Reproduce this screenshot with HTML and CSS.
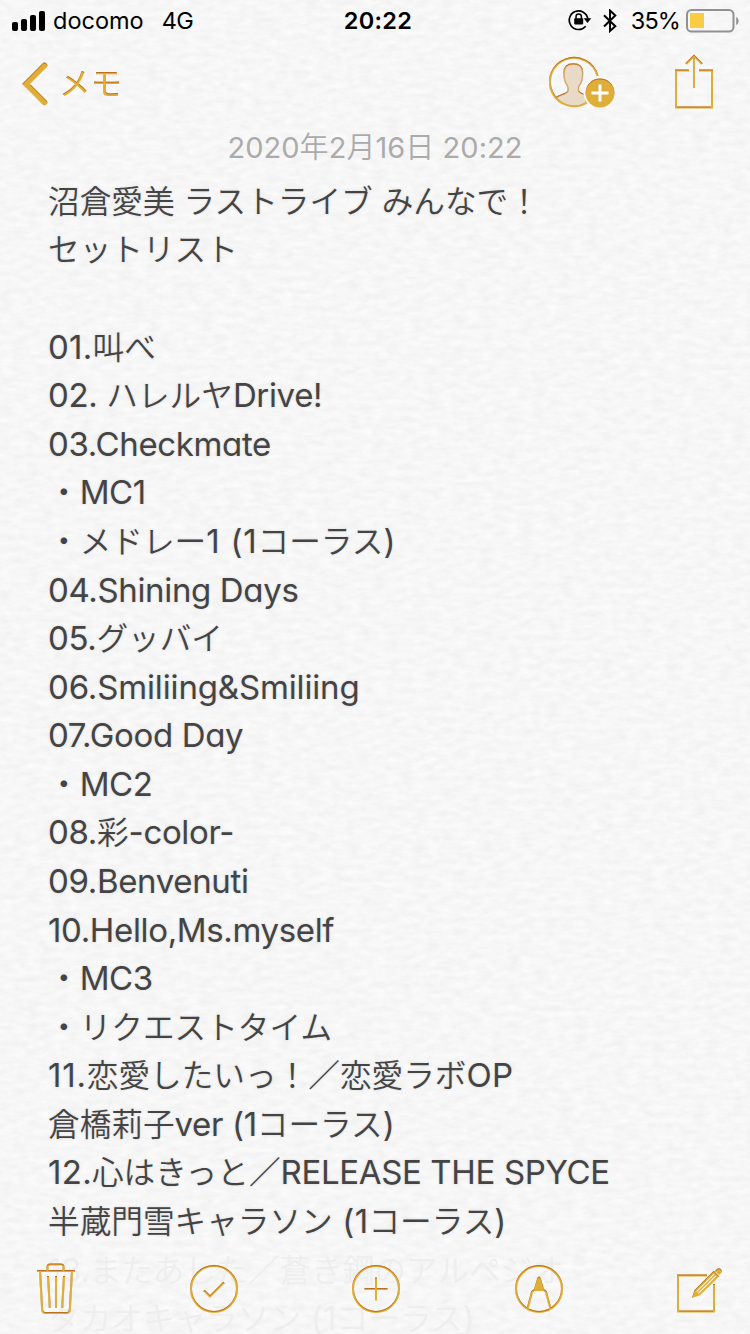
FILE: index.html
```html
<!DOCTYPE html>
<html lang="ja">
<head>
<meta charset="utf-8">
<title>メモ</title>
<link rel="stylesheet" href="styles.css">
</head>
<body>
<div class="screen">
  <svg class="paper" width="750" height="1334" aria-hidden="true">
    <defs>
      <filter id="grain" x="0" y="0" width="100%" height="100%" color-interpolation-filters="sRGB">
        <feTurbulence type="fractalNoise" baseFrequency="0.075 0.17" numOctaves="3" seed="7"/>
        <feColorMatrix values="0 0 0 0.055 0.938  0 0 0 0.055 0.938  0 0 0 0.055 0.938  0 0 0 0 1"/>
      </filter>
      <filter id="press" x="-10%" y="-10%" width="120%" height="120%" color-interpolation-filters="sRGB">
        <feOffset in="SourceAlpha" dy="1" result="down"/>
        <feFlood flood-color="#b9691a" flood-opacity="0.9"/>
        <feComposite in2="SourceAlpha" operator="in"/>
        <feComposite in2="down" operator="out" result="edge"/>
        <feMerge><feMergeNode in="SourceGraphic"/><feMergeNode in="edge"/></feMerge>
      </filter>
    </defs>
    <rect class="grain" width="750" height="1334"/>
  </svg>

  <header class="status">
    <div class="status-left">
      <svg width="34" height="20" viewBox="0 0 34 20"><rect x="0" y="11" width="6" height="9" rx="2"/><rect x="9" y="8" width="6" height="12" rx="2"/><rect x="18" y="4" width="6" height="16" rx="2"/><rect x="27" y="0" width="6" height="20" rx="2"/></svg>
      <span class="carrier">docomo</span><span class="network">4G</span>
    </div>
    <div class="clock">20:22</div>
    <div class="status-right">
      <svg class="lock" width="24" height="22" viewBox="0 0 24 22"><path d="M17.7 17.2A9.3 9.3 0 1 1 19.8 10" fill="none" stroke="#000" stroke-width="1.7"/><path d="M15.7 9.2h7.6L19.5 14z"/><rect x="6.2" y="9.2" width="9" height="6.2" rx=".8"/><path d="M8 10V7.7a2.7 2.7 0 0 1 5.4 0V10" fill="none" stroke="#000" stroke-width="1.5"/></svg>
      <svg class="bluetooth" width="14" height="24" viewBox="0 0 14 24"><path d="M1 6.3l11.3 11L7 22V1.5l5.3 5L1 17.5" fill="none" stroke="#000" stroke-width="2"/></svg>
      <span class="percent">35%</span>
      <svg class="battery" width="54" height="24" viewBox="0 0 54 24"><rect x="1" y="1" width="46.500" height="21.500" rx="4.500" fill="none" stroke="#919191" stroke-width="2"/><rect x="4" y="4" width="14" height="15" fill="#f8cd42"/><path d="M50.200 8c3.200 1.500 3.200 6.700 0 8z" fill="#919191"/></svg>
    </div>
  </header>

  <nav class="nav">
    <a class="back">
      <svg class="gold" width="26" height="44" viewBox="0 0 26 44"><path d="M22.500 3.500L4 22l18.500 18.500" fill="none" stroke="#deae38" stroke-width="5.500" stroke-linecap="round" stroke-linejoin="miter"/></svg>
      <span class="gold">メモ</span>
    </a>
    <div class="nav-actions">
      <svg class="gold" width="68" height="54" viewBox="0 0 68 54">
        <path d="M7.500 41.500c3-2.500 6-2.500 9.500-4.500 2.500-1.300 2.800-4 1.600-7C16 27 15 24 15 17c0-6 3.500-9 9.300-9s9.300 3 9.300 9c0 7-1 10-3.600 13-1.200 3-.9 5.700 1.600 7 2 1 4 1.500 5.400 2v8C28 52 14 51 7.500 41.500z" fill="#e8dac7" stroke="#d3a66b" stroke-width="1.300"/>
        <path d="M48.500 20A24.200 24.200 0 1 0 38 46.500" fill="none" stroke="#deae38" stroke-width="2"/>
        <path d="M42 37h17M50.500 28.500v17" stroke="#fff" stroke-width="3"/>
      </svg>
      <svg class="gold share" width="40" height="56" viewBox="0 0 40 56"><path d="M15 16.500H2v37h36v-37H25M20 34V2M12 10l8-8 8 8" fill="none" stroke="#deae38" stroke-width="2"/></svg>
      <svg class="add-badge" width="34" height="34" viewBox="0 0 34 34"><circle cx="17" cy="17" r="16.500" fill="#f7f7f7"/><g class="gold"><circle cx="17" cy="17" r="14.400" fill="#deae38"/></g><path d="M8.500 17h17M17 8.500v17" stroke="#fff" stroke-width="3"/></svg>
    </div>
  </nav>

  <main class="note">
    <time class="date">2020<b>年</b>2<b>月</b>16<b>日</b> 20:22</time>
    <div class="body">
      <p>沼倉愛美<i> </i>ラストライブ<i> </i>みんなで！</p>
      <p>セットリスト</p>
      <p></p>
      <p><i class="number">01.</i>叫べ</p>
      <p><i>02. </i>ハレルヤ<i>Drive!</i></p>
      <p><i>03.Checkmate</i></p>
      <p>・<i>MC1</i></p>
      <p>・メドレー<i class="wide">1 (1</i>コーラス<i>)</i></p>
      <p><i>04.Shining Days</i></p>
      <p><i>05.</i>グッバイ</p>
      <p><i class="loose">06.Smiliing&amp;Smiliing</i></p>
      <p><i>07.Good Day</i></p>
      <p>・<i>MC2</i></p>
      <p><i>08.</i>彩<i>-color-</i></p>
      <p><i>09.Benvenuti</i></p>
      <p><i>10.Hello,Ms.myself</i></p>
      <p>・<i>MC3</i></p>
      <p>・リクエストタイム</p>
      <p><i class="wide">11.</i>恋愛したいっ！／恋愛ラボ<i class="number">OP</i></p>
      <p>倉橋莉子<i>ver (1</i>コーラス<i>)</i></p>
      <p><i class="number">12.</i>心はきっと／<i>RELEASE THE SPYCE</i></p>
      <p>半蔵門雪キャラソン<i class="number"> (1</i>コーラス<i>)</i></p>
      <p class="under"><i>13.</i>またあした／蒼き鋼のアルペジオ</p>
      <p class="under">タカオキャラソン<i class="number"> (1</i>コーラス<i>)</i></p>
    </div>
  </main>

  <footer class="toolbar">
    <svg class="gold" width="40" height="52" viewBox="0 0 40 52"><g fill="none" stroke="#deae38" stroke-width="2"><path d="M1 8h38M11.500 8V4q0-2.500 2.500-2.500h11q2.500 0 2.500 2.500v4M4 8l2.200 39q.2 3 3 3h21.600q2.800 0 3-3L36 8M12 13l1.800 32M20 13v32M28 13l-1.800 32"/></g></svg>
    <svg class="gold" width="50" height="50" viewBox="0 0 50 50"><g fill="none" stroke="#deae38" stroke-width="2"><circle cx="25" cy="25" r="23"/><path d="M15 26.500l6 6 14-14"/></g></svg>
    <svg class="gold" width="50" height="50" viewBox="0 0 50 50"><g fill="none" stroke="#deae38" stroke-width="2"><circle cx="25" cy="25" r="23"/><path d="M13.500 25h23M25 13.500v23"/></g></svg>
    <svg class="gold" width="50" height="50" viewBox="0 0 50 50"><g fill="none" stroke="#deae38" stroke-width="2"><circle cx="25" cy="25" r="23"/><path d="M13.500 45l4.500-17 2-2M36.500 45L32 28l-2-2"/></g><path d="M19.500 27l3.700-12.500q1.800-4 3.600 0L30.500 27z" fill="#deae38"/></svg>
    <svg class="gold" width="48" height="50" viewBox="0 0 48 50"><path d="M31 11.500H2v36h36V20" fill="none" stroke="#deae38" stroke-width="2"/><path d="M17.500 32.500l2-6L37.800 8.200l4 4L23.500 30.500z" fill="#f7f7f7" stroke="#deae38" stroke-width="2"/><path d="M17.500 32.500l2-6 4 4zM39 7l2.200-2.200q2-1.300 3.700.4 1.600 1.800.3 3.700L43 11z" fill="#deae38"/><path d="M21.500 28.500l18-18" stroke="#deae38" stroke-width="1.500"/></svg>
  </footer>
</div>
</body>
</html>
```
FILE: styles.css
```css
* { box-sizing: border-box; }
body { margin: 0; font-family: Inter, "Noto Sans CJK JP", sans-serif; }
.screen { position: relative; width: 750px; height: 1334px; overflow: hidden; background: #f7f7f7; }
.paper { position: absolute; top: 0; left: 0; }
.grain { filter: url(#grain); }
.gold { filter: url(#press); }
.status, .nav, .note { position: relative; }
svg { display: block; flex: none; }

.status { height: 40px; display: grid; grid-template-columns: 1fr auto 1fr; align-items: center; padding: 2px 10px 0 12px; font-size: 23.5px; line-height: 38px; white-space: nowrap; }
.status-left, .status-right { display: flex; align-items: center; }
.status-right { justify-content: flex-end; }
.carrier { margin-left: 7px; }
.network { margin-left: 18px; letter-spacing: -.5px; }
.clock { margin-left: 4px; font-weight: 600; letter-spacing: .3px; }
.lock { margin-top: -2px; }
.bluetooth { margin-left: 11px; }
.percent { margin: 0 6px 0 14px; letter-spacing: -.9px; }

.nav { height: 88px; display: flex; justify-content: space-between; padding: 15px 36px 0 22px; }
.back { display: flex; height: 56px; align-items: center; gap: 11px; color: #deae38; font-size: 31.5px; }
.back svg { margin-top: 1px; }
.back span { margin-top: -5px; }
.nav-actions { position: relative; display: flex; gap: 57px; }
.nav-actions svg:first-child { margin-top: 1px; }
.add-badge { position: absolute; left: 33.5px; top: 21px; }
.share { margin-top: -1px; }

.date { display: block; height: 46.9px; text-align: center; color: #ababab; font-size: 29px; line-height: 34px; font-weight: 370; letter-spacing: .05px; }
.date b { font-family: "Noto Sans CJK JP"; font-weight: 350; }
.body { padding-left: 48px; color: #444; font: 350 31.65px/48.58px "Noto Sans CJK JP", sans-serif; text-shadow: 0 0 3px rgba(0,0,0,.12); }
.body p { margin: 0; height: 48.58px; white-space: pre; }
.body i { font-family: Inter, sans-serif; font-style: normal; font-weight: 385; font-size: 33px; line-height: 40px; font-feature-settings: "cv11"; letter-spacing: -.35px; }
.body .loose { letter-spacing: -.15px; }
.body .number { letter-spacing: .3px; }
.body .wide { letter-spacing: .8px; }
.body .under { color: #eee; text-shadow: none; }

.toolbar { position: absolute; left: 0; right: 0; bottom: 1px; height: 88px; display: flex; justify-content: space-between; align-items: center; padding: 0 26px 0 36px; }
```
